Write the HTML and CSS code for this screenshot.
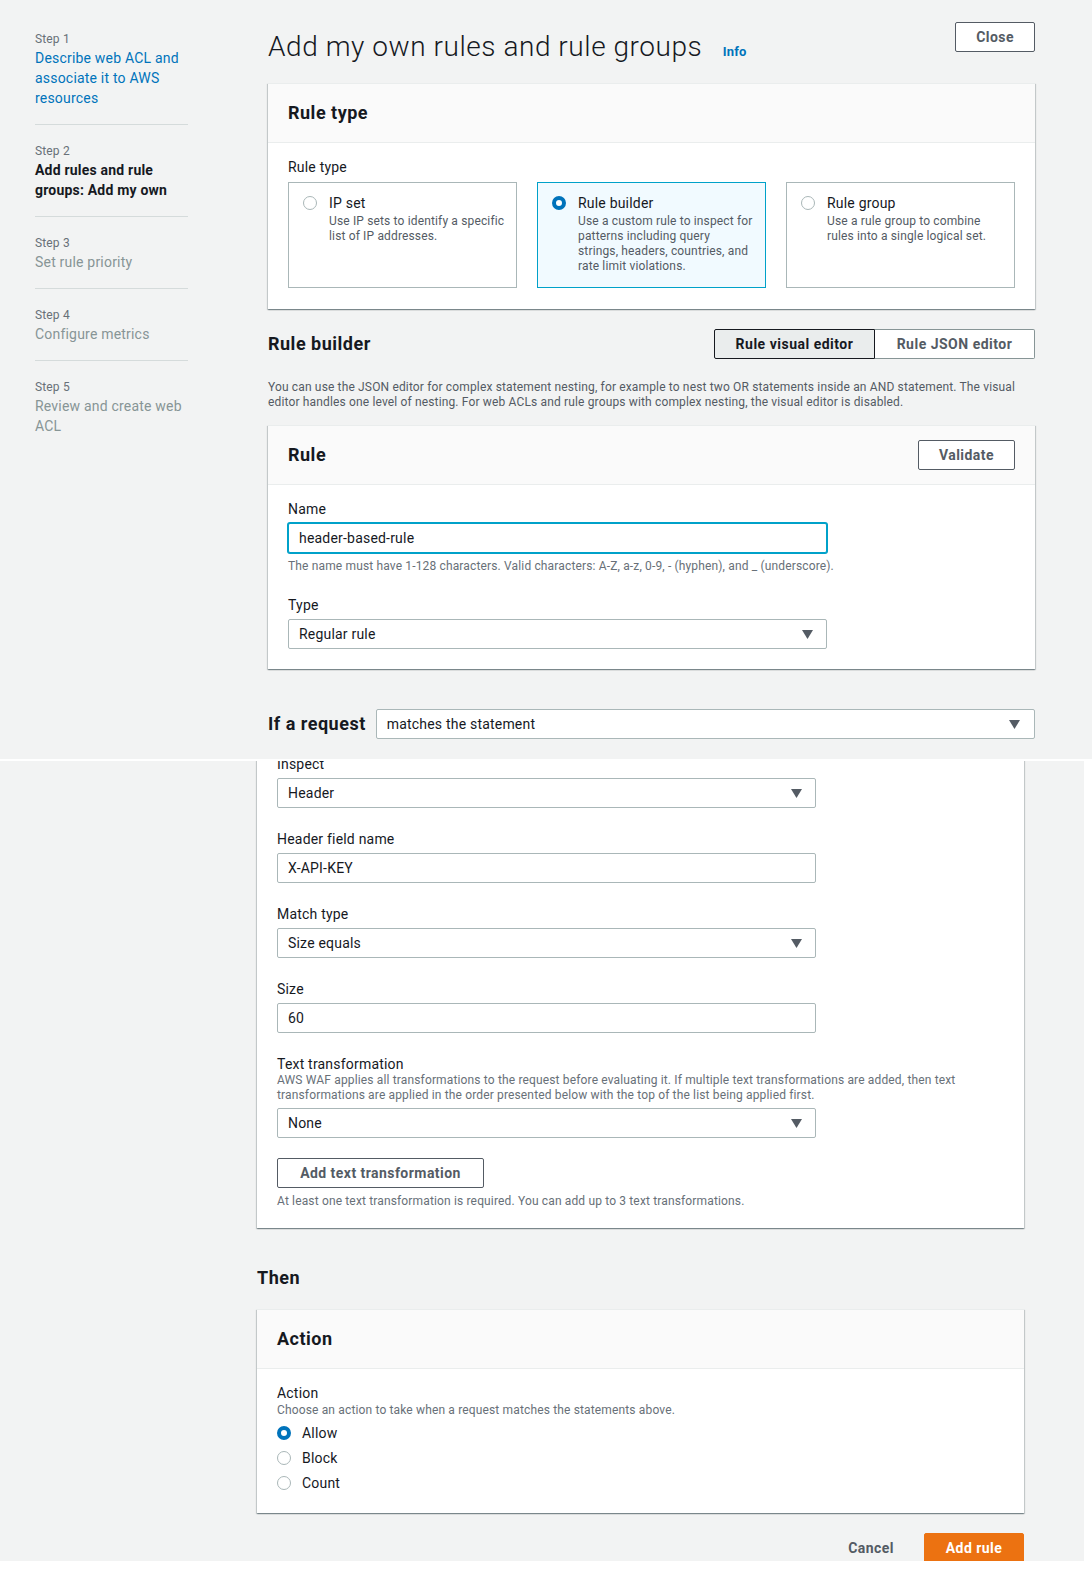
FILE: index.html
```html
<!DOCTYPE html>
<html lang="en">
<head>
<meta charset="utf-8">
<title>Add my own rules and rule groups</title>
<link rel="stylesheet" href="styles.css">
</head>
<body>
<div class="screen screen-top">
  <nav class="steps">
    <div class="step">
      <div class="step-num">Step 1</div>
      <a class="step-title link">Describe web ACL and associate it to AWS resources</a>
    </div>
    <div class="step">
      <div class="step-num">Step 2</div>
      <div class="step-title current">Add rules and rule groups: Add my own</div>
    </div>
    <div class="step">
      <div class="step-num">Step 3</div>
      <div class="step-title disabled">Set rule priority</div>
    </div>
    <div class="step">
      <div class="step-num">Step 4</div>
      <div class="step-title disabled">Configure metrics</div>
    </div>
    <div class="step step-last">
      <div class="step-num">Step 5</div>
      <div class="step-title disabled">Review and create web ACL</div>
    </div>
  </nav>

  <main class="main">
    <header class="page-head">
      <h1 class="page-title">Add my own rules and rule groups <a class="info">Info</a></h1>
      <button class="btn">Close</button>
    </header>

    <section class="card">
      <div class="card-head"><h2>Rule type</h2></div>
      <div class="card-body body-tiles">
        <div class="label">Rule type</div>
        <div class="tiles">
          <div class="tile">
            <span class="radio"></span>
            <div class="tile-text">
              <div class="tile-title">IP set</div>
              <div class="tile-desc">Use IP sets to identify a specific<br>list of IP addresses.</div>
            </div>
          </div>
          <div class="tile tile-selected">
            <span class="radio radio-on"></span>
            <div class="tile-text">
              <div class="tile-title">Rule builder</div>
              <div class="tile-desc">Use a custom rule to inspect for<br>patterns including query<br>strings, headers, countries, and<br>rate limit violations.</div>
            </div>
          </div>
          <div class="tile">
            <span class="radio"></span>
            <div class="tile-text">
              <div class="tile-title">Rule group</div>
              <div class="tile-desc">Use a rule group to combine<br>rules into a single logical set.</div>
            </div>
          </div>
        </div>
      </div>
    </section>

    <div class="builder-head">
      <h2 class="section-title">Rule builder</h2>
      <div class="segmented">
        <button class="seg seg-on">Rule visual editor</button>
        <button class="seg">Rule JSON editor</button>
      </div>
    </div>
    <p class="builder-desc">You can use the JSON editor for complex statement nesting, for example to nest two OR statements inside an AND statement. The visual editor handles one level of nesting. For web ACLs and rule groups with complex nesting, the visual editor is disabled.</p>

    <section class="card card-rule">
      <div class="card-head">
        <h2>Rule</h2>
        <button class="btn">Validate</button>
      </div>
      <div class="card-body body-rule">
        <div class="label">Name</div>
        <div class="input input-focus">header-based-rule</div>
        <div class="hint">The name must have 1-128 characters. Valid characters: A-Z, a-z, 0-9, - (hyphen), and _ (underscore).</div>
        <div class="label field-gap">Type</div>
        <div class="input select">Regular rule<svg class="caret" viewBox="0 0 11 9"><polygon points="0,0 11,0 5.5,9"/></svg></div>
      </div>
    </section>

    <div class="if-row">
      <h2 class="section-title">If a request</h2>
      <div class="input select select-wide">matches the statement<svg class="caret" viewBox="0 0 11 9"><polygon points="0,0 11,0 5.5,9"/></svg></div>
    </div>
  </main>
</div>

<div class="screen screen-bottom">
  <div class="col">
    <section class="card card-cont">
      <div class="card-body body-cont">
        <div class="label">Inspect</div>
        <div class="input select">Header<svg class="caret" viewBox="0 0 11 9"><polygon points="0,0 11,0 5.5,9"/></svg></div>

        <div class="label field-gap">Header field name</div>
        <div class="input">X-API-KEY</div>

        <div class="label field-gap">Match type</div>
        <div class="input select">Size equals<svg class="caret" viewBox="0 0 11 9"><polygon points="0,0 11,0 5.5,9"/></svg></div>

        <div class="label field-gap">Size</div>
        <div class="input">60</div>

        <div class="label field-gap label-tight">Text transformation</div>
        <div class="desc">AWS WAF applies all transformations to the request before evaluating it. If multiple text transformations are added, then text transformations are applied in the order presented below with the top of the list being applied first.</div>
        <div class="input select">None<svg class="caret" viewBox="0 0 11 9"><polygon points="0,0 11,0 5.5,9"/></svg></div>

        <button class="btn btn-add">Add text transformation</button>
        <div class="hint">At least one text transformation is required. You can add up to 3 text transformations.</div>
      </div>
    </section>

    <h2 class="section-title then">Then</h2>

    <section class="card">
      <div class="card-head"><h2>Action</h2></div>
      <div class="card-body body-action">
        <div class="label label-tight">Action</div>
        <div class="desc desc-action">Choose an action to take when a request matches the statements above.</div>
        <div class="radio-list">
          <div class="radio-row"><span class="radio radio-on"></span><span>Allow</span></div>
          <div class="radio-row"><span class="radio"></span><span>Block</span></div>
          <div class="radio-row"><span class="radio"></span><span>Count</span></div>
        </div>
      </div>
    </section>

    <div class="actions">
      <button class="btn-link">Cancel</button>
      <button class="btn btn-primary">Add rule</button>
    </div>
  </div>
</div>
</body>
</html>
```
FILE: styles.css
```css
* { box-sizing: border-box; }

html, body {
  margin: 0;
  padding: 0;
  background: #ffffff;
}

body {
  font-family: Roboto, "Liberation Sans", Arial, sans-serif;
  font-size: 14px;
  line-height: 20px;
  letter-spacing: 0.2px;
  color: #16191f;
}

button {
  font-family: inherit;
  cursor: pointer;
}

.screen {
  background: #f2f3f3;
}

.screen-top {
  height: 761px;
  display: flex;
  align-items: flex-start;
  border-bottom: 2px solid #ffffff;
}

.screen-bottom {
  width: 1084px;
  height: 800px;
  overflow: hidden;
}

/* ---------- side navigation ---------- */
.steps {
  width: 153px;
  margin-left: 35px;
  padding-top: 30px;
  flex: none;
}

.step {
  padding: 17px 0 16px;
  border-bottom: 1px solid #d5dbdb;
}

.step:first-child { padding-top: 0; }
.step-last { border-bottom: 0; }

.step-num {
  font-size: 12px;
  line-height: 18px;
  letter-spacing: 0.15px;
  color: #687078;
}

.step-title {
  font-size: 14px;
  line-height: 20px;
  display: block;
}

.step-title.link { color: #0073bb; text-decoration: none; }
.step-title.current { font-weight: 700; color: #16191f; }
.step-title.disabled { color: #879596; }

/* ---------- main column ---------- */
.main {
  width: 767px;
  margin-left: 80px;
  flex: none;
}

.page-head {
  height: 83px;
  padding-top: 22px;
  display: flex;
  justify-content: space-between;
  align-items: flex-start;
}

.page-title {
  margin: 8px 0 0;
  font-size: 28px;
  line-height: 34px;
  font-weight: 300;
  letter-spacing: 0.55px;
  color: #16191f;
}

.info {
  margin-left: 13px;
  font-size: 13px;
  font-weight: 700;
  letter-spacing: 0.2px;
  color: #0073bb;
}

.btn {
  height: 30px;
  padding: 0 20px;
  background: #ffffff;
  border: 1px solid #545b64;
  border-radius: 2px;
  font-size: 14px;
  font-weight: 700;
  letter-spacing: 0.45px;
  color: #545b64;
  line-height: 28px;
}

/* ---------- cards ---------- */
.card {
  background: #ffffff;
  border-top: 1px solid #eaeded;
  box-shadow: 0 1px 1px 0 rgba(0, 28, 36, 0.3),
              1px 1px 1px 0 rgba(0, 28, 36, 0.15),
              -1px 1px 1px 0 rgba(0, 28, 36, 0.15);
}

.card-head {
  height: 59px;
  padding: 0 20px;
  display: flex;
  align-items: center;
  justify-content: space-between;
  background: #fafafa;
  border-bottom: 1px solid #eaeded;
}

.card-head h2 {
  margin: 0;
  font-size: 18px;
  line-height: 22px;
  font-weight: 700;
  letter-spacing: 0.5px;
}

.card-body {
  padding: 15px 20px 20px;
}

.label {
  font-size: 14px;
  line-height: 18px;
  margin-bottom: 5px;
  color: #16191f;
}

.label-tight { margin-bottom: 0; }

.field-gap { margin-top: 22px; }

.hint {
  margin-top: 6px;
  font-size: 12px;
  line-height: 15px;
  letter-spacing: 0.15px;
  color: #687078;
}

.desc {
  font-size: 12px;
  line-height: 15px;
  letter-spacing: 0.15px;
  color: #687078;
  margin-bottom: 5px;
}

/* ---------- rule type tiles ---------- */
.body-tiles {
  padding-bottom: 21px;
}

.body-tiles .label { margin-bottom: 6px; }

.tiles {
  display: grid;
  grid-template-columns: repeat(3, 1fr);
  gap: 20px;
}

.tile {
  height: 106px;
  padding: 9px 8px 0 14px;
  border: 1px solid #aab7b8;
  display: flex;
  align-items: flex-start;
}

.tile-selected {
  background: #f1faff;
  border-color: #00a1c9;
}

.tile .radio { margin-top: 4px; }

.tile-text {
  margin-left: 12px;
  white-space: nowrap;
}

.tile-title {
  font-size: 14px;
  line-height: 22px;
}

.tile-desc {
  font-size: 12px;
  line-height: 15px;
  letter-spacing: 0.15px;
  color: #545b64;
}

.radio {
  flex: none;
  display: inline-block;
  width: 14px;
  height: 14px;
  border-radius: 50%;
  border: 1px solid #aab7b8;
  background: #ffffff;
}

.radio-on {
  border: 4px solid #0073bb;
}

/* ---------- rule builder ---------- */
.builder-head {
  margin-top: 20px;
  height: 30px;
  display: flex;
  align-items: center;
  justify-content: space-between;
}

.section-title {
  margin: 0;
  font-size: 18px;
  line-height: 22px;
  font-weight: 700;
  letter-spacing: 0.5px;
}

.segmented {
  display: flex;
  height: 30px;
}

.seg {
  height: 30px;
  padding: 0;
  background: #ffffff;
  border: 1px solid #879596;
  font-size: 14px;
  font-weight: 700;
  letter-spacing: 0.5px;
  color: #545b64;
  width: 160px;
}

.seg-on {
  width: 161px;
  background: #eaeded;
  border-color: #16191f;
  color: #16191f;
  border-radius: 2px 0 0 2px;
}

.seg + .seg {
  border-left: 0;
  border-radius: 0 2px 2px 0;
}

.builder-desc {
  margin: 21px 0 0;
  font-size: 12px;
  line-height: 15px;
  letter-spacing: 0.15px;
  color: #545b64;
}

.card-rule { margin-top: 15px; }

/* ---------- inputs ---------- */
.input {
  width: 539px;
  height: 30px;
  padding: 0 10px;
  border: 1px solid #aab7b8;
  border-radius: 2px;
  background: #ffffff;
  font-size: 14px;
  line-height: 28px;
  color: #16191f;
  display: flex;
  align-items: center;
}

.input-focus {
  border-color: #00a1c9;
  box-shadow: 0 0 0 1px #00a1c9;
}

.select {
  justify-content: space-between;
  padding-right: 13px;
}

.caret {
  width: 11px;
  height: 9px;
  fill: #545b64;
}

.if-row {
  margin-top: 40px;
  height: 30px;
  display: flex;
  align-items: center;
}

.select-wide {
  flex: 1;
  width: auto;
  margin-left: 10px;
  padding-right: 14px;
}

/* ---------- bottom screen ---------- */
.col {
  width: 767px;
  margin-left: 257px;
}

.card-cont {
  margin-top: -21px;
  border-top: 0;
}

.body-cont {
  padding: 15px 20px 19px;
}

.btn-add {
  display: block;
  width: 207px;
  padding: 0;
  margin-top: 20px;
}

.then {
  margin-top: 39px;
  margin-bottom: 20px;
}

.body-action {
  padding-bottom: 18px;
}

.desc-action {
  line-height: 16px;
  margin-bottom: 2px;
}

.radio-row {
  height: 25px;
  display: flex;
  align-items: center;
  gap: 11px;
  font-size: 14px;
}

.actions {
  margin-top: 20px;
  display: flex;
  justify-content: flex-end;
  align-items: center;
}

.btn-link {
  height: 30px;
  padding: 0 20px;
  margin-right: 10px;
  border: 0;
  background: transparent;
  font-size: 14px;
  font-weight: 700;
  letter-spacing: 0.45px;
  color: #545b64;
}

.btn-primary {
  width: 100px;
  padding: 0;
  background: #ec7211;
  border-color: #ec7211;
  color: #ffffff;
}
```
